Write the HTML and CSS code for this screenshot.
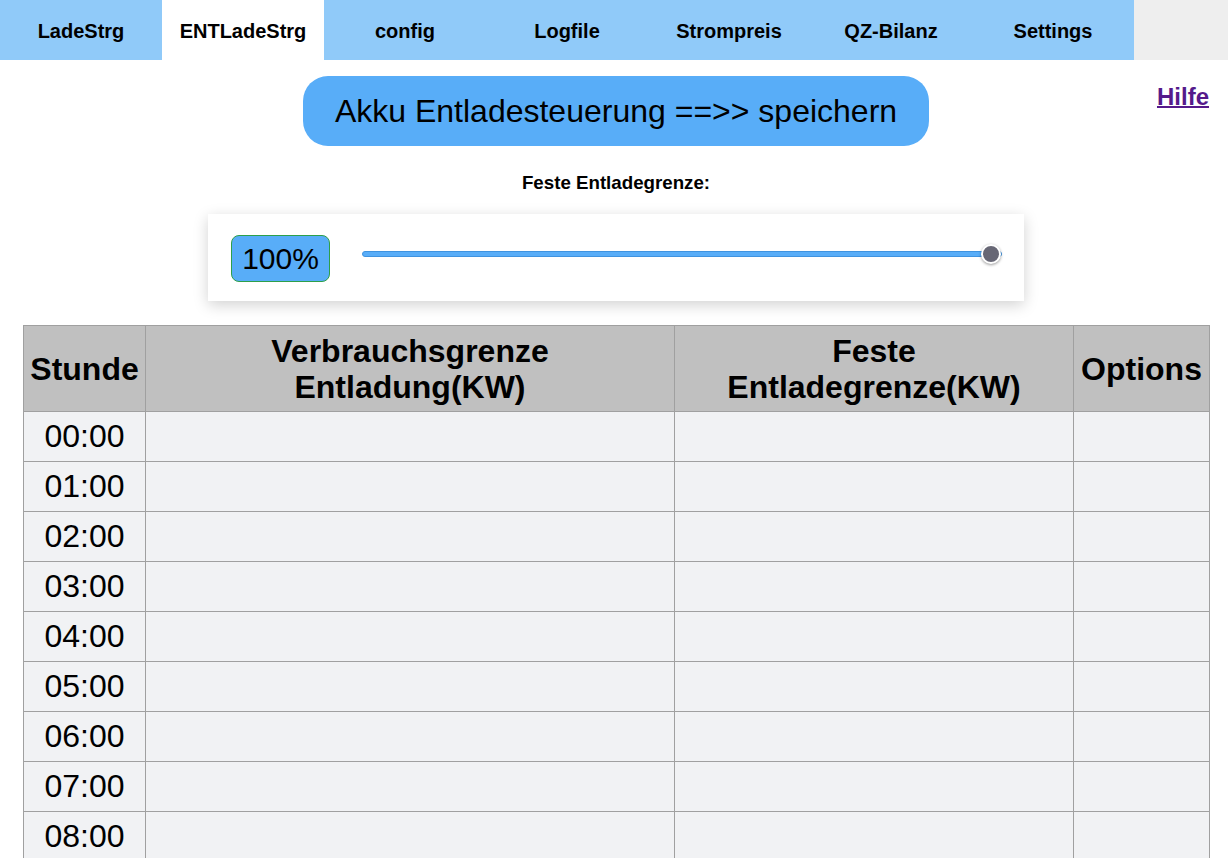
FILE: index.html
```html
<!DOCTYPE html>
<html lang="de">
<head>
<meta charset="utf-8">
<title>ENTLadeStrg</title>
<link rel="stylesheet" href="styles.css">
</head>
<body>
<nav class="tabs">
  <a class="tab">LadeStrg</a>
  <a class="tab active">ENTLadeStrg</a>
  <a class="tab">config</a>
  <a class="tab">Logfile</a>
  <a class="tab">Strompreis</a>
  <a class="tab">QZ-Bilanz</a>
  <a class="tab">Settings</a>
  <span class="tab-rest"></span>
</nav>
<main class="main">
  <div class="top-row">
    <span></span>
    <button class="save-btn">Akku Entladesteuerung ==&gt;&gt; speichern</button>
    <a class="help" href="#">Hilfe</a>
  </div>
  <h3 class="limit-title">Feste Entladegrenze:</h3>
  <div class="slider-card">
    <div class="value-box">100%</div>
    <input class="range" type="range" min="0" max="100" value="100">
  </div>
  <table class="grid">
    <colgroup>
      <col class="c1"><col class="c2"><col class="c3"><col class="c4">
    </colgroup>
    <thead>
      <tr><th>Stunde</th><th>Verbrauchsgrenze<br>Entladung(KW)</th><th>Feste<br>Entladegrenze(KW)</th><th>Options</th></tr>
    </thead>
    <tbody>
      <tr><td>00:00</td><td></td><td></td><td></td></tr>
      <tr><td>01:00</td><td></td><td></td><td></td></tr>
      <tr><td>02:00</td><td></td><td></td><td></td></tr>
      <tr><td>03:00</td><td></td><td></td><td></td></tr>
      <tr><td>04:00</td><td></td><td></td><td></td></tr>
      <tr><td>05:00</td><td></td><td></td><td></td></tr>
      <tr><td>06:00</td><td></td><td></td><td></td></tr>
      <tr><td>07:00</td><td></td><td></td><td></td></tr>
      <tr><td>08:00</td><td></td><td></td><td></td></tr>
      <tr><td>09:00</td><td></td><td></td><td></td></tr>
    </tbody>
  </table>
</main>
</body>
</html>
```

FILE: styles.css
```css
html, body {
  margin: 0;
  padding: 0;
  background: #ffffff;
  font-family: "Liberation Sans", Arial, sans-serif;
  color: #000;
}

.tabs {
  display: flex;
  height: 60px;
  background: #eeeeee;
}

.tab {
  width: 162px;
  flex: 0 0 162px;
  display: flex;
  align-items: center;
  justify-content: center;
  background: #90caf9;
  font-weight: bold;
  font-size: 20px;
  color: #000;
  padding-top: 2px;
  box-sizing: border-box;
}

.tab.active {
  background: #ffffff;
}

.tab-rest {
  flex: 1;
}

.main {
  padding: 0 19px 0 23px;
}

.top-row {
  display: grid;
  grid-template-columns: 1fr auto 1fr;
  align-items: start;
  margin-top: 16px;
}

.save-btn {
  height: 70px;
  padding: 0 32px;
  border: none;
  border-radius: 25px;
  background: #58adf8;
  font-family: "Liberation Sans", Arial, sans-serif;
  font-size: 32px;
  color: #000;
}

.help {
  justify-self: end;
  margin-top: 7px;
  font-weight: bold;
  font-size: 24px;
  color: #551a8b;
  text-decoration: underline;
  text-decoration-thickness: 2px;
}

.limit-title {
  margin: 26px 0 0;
  text-align: center;
  font-size: 18.72px;
  font-weight: bold;
  line-height: 22px;
}

.slider-card {
  width: 816px;
  height: 87px;
  box-sizing: border-box;
  margin: 20px auto 0;
  padding: 21px 22px 0 23px;
  background: #fff;
  box-shadow: 0 4px 14px rgba(0, 0, 0, 0.18);
  display: flex;
  align-items: flex-start;
}

.value-box {
  width: 99px;
  height: 47px;
  box-sizing: border-box;
  border: 1px solid #2e9f4a;
  border-radius: 8px;
  background: #58adf8;
  font-size: 30px;
  line-height: 45px;
  text-align: center;
}

.range {
  -webkit-appearance: none;
  appearance: none;
  flex: 1;
  margin: 10px 0 0 32px;
  height: 18px;
  background: transparent;
}

.range::-webkit-slider-runnable-track {
  height: 6px;
  border-radius: 3px;
  background: #58adf8;
  border: 1px solid #3f93e0;
  box-sizing: border-box;
}

.range::-webkit-slider-thumb {
  -webkit-appearance: none;
  width: 20px;
  height: 20px;
  margin-top: -8px;
  border-radius: 50%;
  background: #676775;
  border: 2px solid #fff;
  box-shadow: 0 1px 3px rgba(0, 0, 0, 0.4);
}

.grid {
  width: 1186px;
  margin-top: 24px;
  border-collapse: collapse;
  table-layout: fixed;
}

.c1 { width: 122px; }
.c2 { width: 529px; }
.c3 { width: 399px; }
.c4 { width: 136px; }

.grid th,
.grid td {
  border: 1px solid #a0a0a0;
  padding: 0;
  text-align: center;
}

.grid th {
  background: #c0c0c0;
  height: 85px;
  font-size: 32px;
  font-weight: bold;
  line-height: 36px;
}

.grid td {
  background: #f1f2f4;
  height: 49px;
  font-size: 32px;
}
```
